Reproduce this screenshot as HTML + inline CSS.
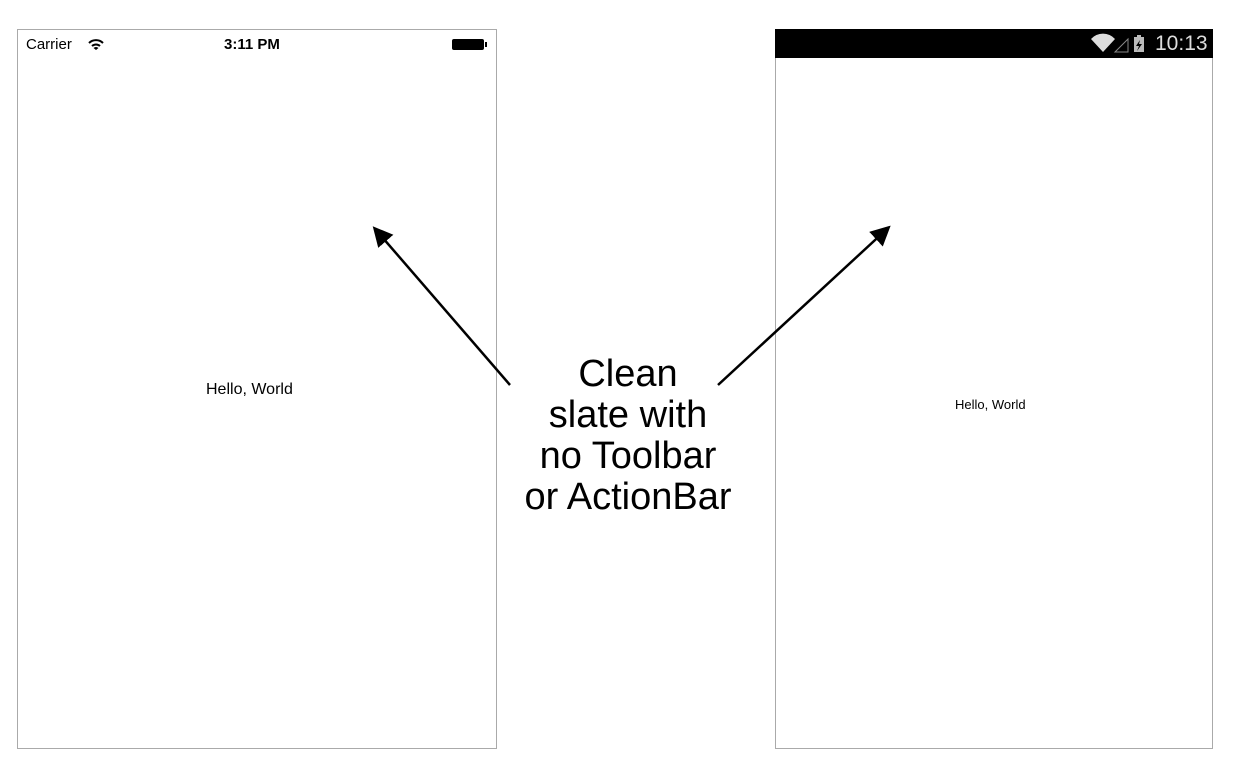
<!DOCTYPE html>
<html><head><style>
body{margin:0;width:1240px;height:782px;background:#fff;position:relative;font-family:"Liberation Sans",Arial,sans-serif;overflow:hidden}
.f{position:absolute;border:1px solid #aaa;box-sizing:border-box}
.t{position:absolute;white-space:nowrap}
</style></head><body>
<div class="f" style="left:17px;top:29px;width:480px;height:720px"></div>
<div class="t" style="left:26px;top:36px;font-size:15px">Carrier</div>
<svg style="position:absolute;left:88px;top:38px" width="16" height="13" viewBox="0 0 16 13"><path d="M1 5 A10 10 0 0 1 15 5" stroke="#000" stroke-width="2" fill="none"/><path d="M4 8 A6 6 0 0 1 12 8" stroke="#000" stroke-width="2" fill="none"/><path d="M8 12 L5.5 10 A4 4 0 0 1 10.5 10Z" fill="#000"/></svg>
<div class="t" style="left:224px;top:36px;font-size:15px;font-weight:bold">3:11 PM</div>
<div style="position:absolute;left:452px;top:39px;width:32px;height:11px;background:#000;border-radius:2px"></div>
<div style="position:absolute;left:485px;top:42px;width:2px;height:5px;background:#000"></div>
<div class="t" style="left:206px;top:381px;font-size:16px">Hello, World</div>

<div class="f" style="left:775px;top:29px;width:438px;height:720px"></div>
<div style="position:absolute;left:775px;top:29px;width:438px;height:29px;background:#000"></div>
<svg style="position:absolute;left:1090px;top:33px" width="70" height="22" viewBox="0 0 70 22"><path d="M1 6 A16 16 0 0 1 25 6 L13 19Z" fill="#ddd"/><path d="M25 19 L38 6 L38 19Z" fill="none" stroke="#888" stroke-width="1"/><rect x="44" y="4" width="10" height="15" fill="#bbb"/><rect x="47" y="2" width="4" height="2" fill="#bbb"/><path d="M50 7 L46 13 L49 13 L47 18 L52 11 L49 11Z" fill="#000"/></svg>
<div class="t" style="left:1155px;top:32px;font-size:21px;color:#ddd">10:13</div>
<div class="t" style="left:955px;top:397px;font-size:13px">Hello, World</div>

<svg style="position:absolute;left:0;top:0" width="1240" height="782"><defs><marker id="a" markerWidth="8" markerHeight="8" refX="6" refY="4" orient="auto"><path d="M0 0 L8 4 L0 8Z" fill="#000"/></marker></defs>
<line x1="510" y1="385" x2="376" y2="230" stroke="#000" stroke-width="2.5" marker-end="url(#a)"/>
<line x1="718" y1="385" x2="887" y2="229" stroke="#000" stroke-width="2.5" marker-end="url(#a)"/></svg>
<div class="t" style="left:500px;top:354px;width:256px;text-align:center;font-size:38px;line-height:41px">Clean<br>slate with<br>no Toolbar<br>or ActionBar</div>
</body></html>
